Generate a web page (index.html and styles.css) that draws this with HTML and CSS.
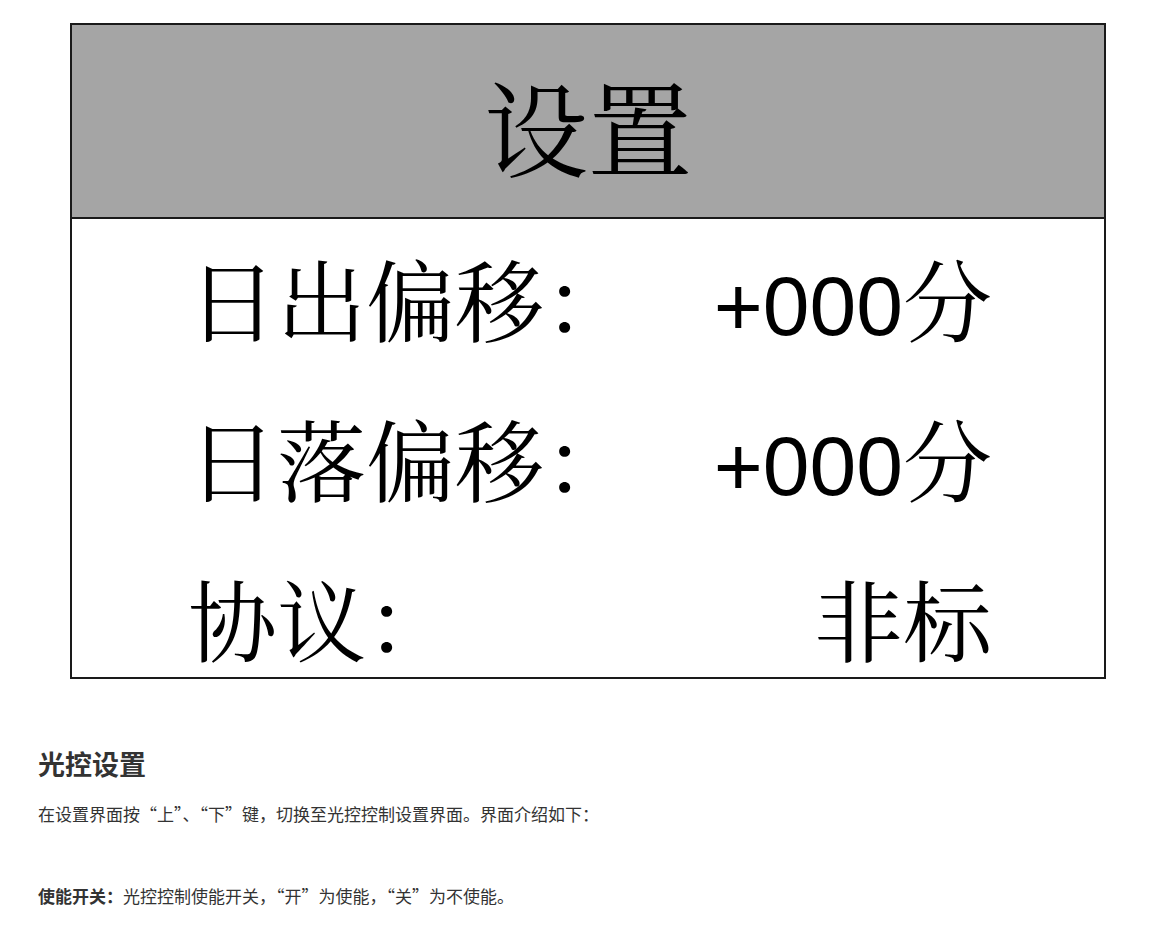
FILE: index.html
```html
<!DOCTYPE html>
<html lang="zh-CN">
<head>
    <meta charset="UTF-8">
    <meta name="viewport" content="width=device-width, initial-scale=1.0">
    <title>光控设置</title>
    <link rel="stylesheet" href="styles.css">
</head>
<body>
    <div class="doc">
        <!-- LCD screen mock-up: settings page -->
        <div class="screen">
            <div class="screen-title">设置</div>
            <div class="screen-body">
                <div class="screen-row">
                    <span class="label">日出偏移：</span>
                    <span class="value"><span class="num">+000</span>分</span>
                </div>
                <div class="screen-row">
                    <span class="label">日落偏移：</span>
                    <span class="value"><span class="num">+000</span>分</span>
                </div>
                <div class="screen-row">
                    <span class="label">协议：</span>
                    <span class="value">非标</span>
                </div>
            </div>
        </div>

        <h2>光控设置</h2>
        <p>在设置界面按“上”、“下”键，切换至光控控制设置界面。界面介绍如下：</p>
        <p class="item"><strong>使能开关：</strong>光控控制使能开关，“开”为使能，“关”为不使能。</p>
    </div>
</body>
</html>
```

FILE: styles.css
```css
:root { --ink: #333; --lcd-bg: #a5a5a5; --lcd-line: #1a1a1a; }

* {
    box-sizing: border-box;
    margin: 0;
    padding: 0;
}

body {
    background: #fff;
    color: var(--ink);
    font-family: "Noto Sans CJK SC", "Noto Sans", sans-serif;
}

.doc {
    padding: 23px 38px 0 38px;
}

/* screen */
.screen {
    width: 1036px;
    margin-left: 32px;
    border: 2px solid var(--lcd-line);
    color: #000;
    font-family: "Noto Serif CJK SC", "Noto Sans CJK SC", serif;
}

.screen-title {
    height: 194px;
    padding-top: 10px;
    background: var(--lcd-bg);
    border-bottom: 2px solid var(--lcd-line);
    font-size: 104px;
    line-height: 180px;
    text-align: center;
}

.screen-body {
    display: flex;
    flex-direction: column;
    gap: 71px;
    padding: 33px 112px 16px 116px;
    background: #fff;
}

.screen-row {
    display: flex;
    justify-content: space-between;
    align-items: center;
    height: 89px;
    font-size: 89px;
    line-height: 1;
}

.num {
    font-family: "Liberation Sans", Arial, sans-serif;
    font-size: 84px;
    line-height: 0;
}

/* text below */
h2 {
    margin-top: 66px;
    font-size: 27px;
    line-height: 38px;
    font-weight: 700;
    color: var(--ink);
}

p {
    margin-top: 18px;
    font-size: 17px;
    line-height: 26px;
}

p.item {
    margin-top: 56px;
}

p strong {
    font-weight: 700;
}
```
